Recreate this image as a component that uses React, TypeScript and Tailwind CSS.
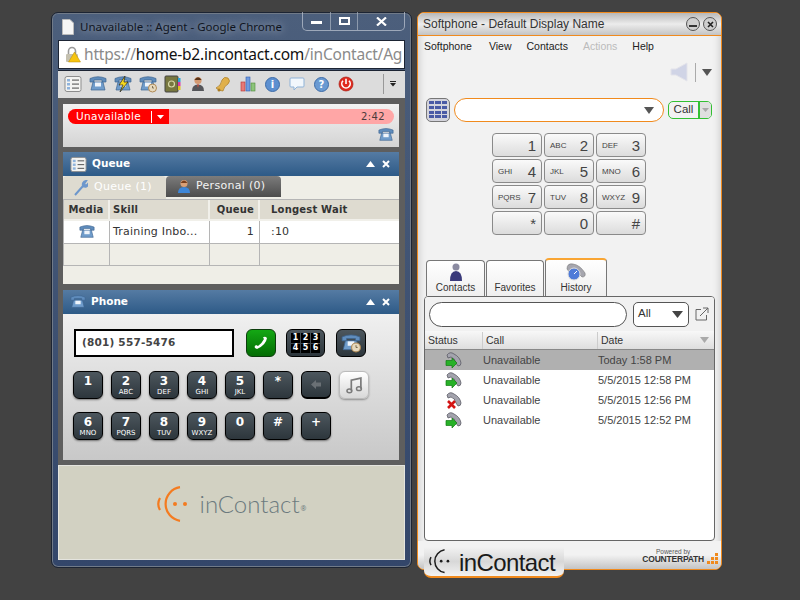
import { ReactNode } from "react";

const verdana = "font-['DejaVu_Sans',sans-serif]";
const arial = "font-['Liberation_Sans',Arial,sans-serif]";

function DeskPhone({ size = 18, clock = false }: { size?: number; clock?: boolean }) {
  return (
    <svg width={size} height={size} viewBox="0 0 18 18">
      <path d="M1 3.5 Q9 0 17 3.5 L17 7 L13 7 L13 5 L5 5 L5 7 L1 7 Z" fill="#5f8cbc" stroke="#3e648f" strokeWidth="0.7" />
      <path d="M4 7 L14 7 L16 15 L2 15 Z" fill="#6f9ccb" stroke="#3e648f" strokeWidth="0.7" />
      <rect x="6" y="7.5" width="6" height="4" fill="#eef4fb" />
      {clock && <circle cx="13.5" cy="13" r="4" fill="#e7d9bd" stroke="#b08a55" />}
      {clock && <path d="M13.5 11 V13 H15" stroke="#6a5a3d" fill="none" strokeWidth="0.8" />}
    </svg>
  );
}

function ListIcon({ size = 18 }: { size?: number }) {
  return (
    <svg width={size} height={size} viewBox="0 0 18 18">
      <rect x="1" y="1.5" width="16" height="15" rx="2" fill="#f3f3f1" stroke="#8d8d8d" />
      {[4, 8, 12].map((y) => (
        <g key={y}>
          <rect x="3" y={y} width="3" height="2.5" fill="#8fb3dc" />
          <rect x="8" y={y + 0.5} width="7" height="1.2" fill="#666" />
        </g>
      ))}
    </svg>
  );
}

function ToolbarIcons() {
  return (
    <div className="flex items-center gap-[7px]">
      <ListIcon />
      <DeskPhone />
      <div className="relative h-[18px] w-[18px]">
        <DeskPhone />
        <svg className="absolute left-0 top-0" width="18" height="18" viewBox="0 0 18 18">
          <path d="M11 1 L5 10 L9 10 L6 17 L14 7 L10 7 Z" fill="#f6d81d" stroke="#222" strokeWidth="0.7" />
        </svg>
      </div>
      <DeskPhone clock />
      <svg width="18" height="18" viewBox="0 0 18 18">
        <rect x="1" y="1" width="13" height="16" rx="1" fill="#77773f" stroke="#444" />
        <rect x="14" y="3" width="2.5" height="4" fill="#2aa5d8" />
        <rect x="14" y="7" width="2.5" height="4" fill="#d83aa5" />
        <rect x="14" y="11" width="2.5" height="4" fill="#e0c020" />
        <circle cx="7.5" cy="9" r="3" fill="none" stroke="#d8d8a8" strokeWidth="1.2" />
      </svg>
      <svg width="18" height="18" viewBox="0 0 18 18">
        <circle cx="9" cy="5.5" r="3.6" fill="#d49a72" />
        <path d="M5.4 5 Q9 -0.5 12.6 5 Z" fill="#5a3418" />
        <path d="M3 16 Q3 9.5 9 9.5 Q15 9.5 15 16 Z" fill="#55565a" />
        <path d="M8 9.5 H10 L9 13 Z" fill="#c8503a" />
      </svg>
      <svg width="18" height="18" viewBox="0 0 18 18">
        <path d="M2 13 Q7 11 8 5 Q10 1 14 3 Q17 6 14 9 Q10 11 9 16 Q5 16 2 13 Z" fill="#e0b04a" stroke="#a97b22" strokeWidth="0.7" />
        <circle cx="5" cy="15" r="1.5" fill="#a97b22" />
      </svg>
      <svg width="18" height="18" viewBox="0 0 18 18">
        <rect x="2" y="7" width="4" height="9" fill="#e77a77" stroke="#b33" strokeWidth="0.6" />
        <rect x="7" y="2" width="4" height="14" fill="#6f9be0" stroke="#2f5fb3" strokeWidth="0.6" />
        <rect x="12" y="8" width="4" height="8" fill="#8cc47a" stroke="#4f8a3c" strokeWidth="0.6" />
      </svg>
      <div className={`mx-[1px] flex h-[15px] w-[15px] items-center justify-center rounded-full border border-[#3d6ca8] bg-[#5c8fd0] text-[10px] font-bold text-white ${verdana}`}>i</div>
      <svg width="18" height="18" viewBox="0 0 18 18">
        <path d="M2 4 Q2 3 3 3 H15 Q16 3 16 4 V11 Q16 12 15 12 H9 L6 15 V12 H3 Q2 12 2 11 Z" fill="#f2f7fc" stroke="#8fb3d8" />
      </svg>
      <div className={`mx-[1px] flex h-[15px] w-[15px] items-center justify-center rounded-full border border-[#3d6ca8] bg-[#6a9ad2] text-[10px] font-bold text-white ${verdana}`}>?</div>
      <svg width="18" height="18" viewBox="0 0 18 18">
        <circle cx="9" cy="9" r="7" fill="#e02a1e" stroke="#a81c12" strokeWidth="0.7" />
        <path d="M6 5.8 A4.2 4.2 0 1 0 12 5.8" fill="none" stroke="#fff" strokeWidth="1.6" />
        <path d="M9 3.8 V9" stroke="#fff" strokeWidth="1.6" />
      </svg>
    </div>
  );
}

function PanelHeader({ icon, title }: { icon: ReactNode; title: string }) {
  return (
    <div className="flex h-[24px] items-center bg-gradient-to-b from-[#557ba3] to-[#2d5a87] pl-[7px] pr-[9px]">
      {icon}
      <span className={`ml-[5px] flex-1 text-[10.5px] font-bold text-white ${verdana}`}>{title}</span>
      <svg width="9" height="6" viewBox="0 0 9 6" className="mr-[7px]">
        <path d="M0 6 L4.5 0 L9 6 Z" fill="#fff" />
      </svg>
      <svg width="8" height="8" viewBox="0 0 8 8">
        <path d="M1 1 L7 7 M7 1 L1 7" stroke="#fff" strokeWidth="2" />
      </svg>
    </div>
  );
}

function DarkKey({ main, sub }: { main: string; sub?: string }) {
  return (
    <div className={`flex h-[28px] w-[30px] flex-col items-center rounded-[6px] border border-black bg-gradient-to-b from-[#4d575e] to-[#2d363c] pt-[3px] text-white shadow-[0_1px_2px_rgba(0,0,0,0.45)] ${verdana}`}>
      <span className="text-[12px] font-bold leading-[13px]">{main}</span>
      {sub && <span className="text-[7px] leading-[8px]">{sub}</span>}
    </div>
  );
}

function Logo({ dark = false, width = 34 }: { dark?: boolean; width?: number }) {
  const c = dark ? "#1c1c1c" : "#f47b20";
  return (
    <svg width={width} height={(width * 36) / 34} viewBox="0 0 34 36" className="shrink-0">
      <path d="M23 1.2 A17 17 0 0 0 23 34.8" fill="none" stroke={c} strokeWidth="2.2" />
      <path d="M3 12 A12 12 0 0 0 3 24" fill="none" stroke={c} strokeWidth="2.2" />
      <circle cx="18" cy="18" r="2" fill={c} />
      <circle cx="28" cy="18" r="2" fill={c} />
    </svg>
  );
}

function AgentWindow() {
  const keysOne = [["1"], ["2", "ABC"], ["3", "DEF"], ["4", "GHI"], ["5", "JKL"], ["*"]];
  const keysTwo = [["6", "MNO"], ["7", "PQRS"], ["8", "TUV"], ["9", "WXYZ"], ["0"], ["#"], ["+"]];
  return (
    <div className="absolute left-[51px] top-[12px] flex h-[556px] w-[361px] flex-col rounded-[7px] border border-[#1c2433] bg-gradient-to-b from-[#4c5f7c] to-[#33466a] px-[6px] pb-[7px] shadow-[0_0_0_1px_#707a88_inset]">
      <div className="relative flex h-[27px] items-center pl-[4px]">
        <svg width="12" height="16" viewBox="0 0 12 16">
          <path d="M0.5 0.5 H8 L11.5 4 V15.5 H0.5 Z" fill="#f5f5f5" stroke="#bbb" />
        </svg>
        <span className="ml-[6px] text-[11.5px] text-[#10151f] [text-shadow:0_0_8px_rgba(255,255,255,0.7)] font-['Noto_Sans',sans-serif]">Unavailable :: Agent - Google Chrome</span>
        <div className="absolute right-0 top-[-1px] flex h-[19px] overflow-hidden rounded-b-[5px] border border-t-0 border-[#c0c8d4]/70">
          <div className="flex w-[28px] items-center justify-center border-r border-[#aab4c2]/70">
            <div className="mt-[3px] h-[3px] w-[11px] bg-white" />
          </div>
          <div className="flex w-[27px] items-center justify-center border-r border-[#aab4c2]/70">
            <div className="h-[8px] w-[11px] border-2 border-white" />
          </div>
          <div className="flex w-[46px] items-center justify-center">
            <svg width="11" height="9" viewBox="0 0 11 9">
              <path d="M1 0.5 L10 8.5 M10 0.5 L1 8.5" stroke="#fff" strokeWidth="2.2" />
            </svg>
          </div>
        </div>
      </div>
      <div className="flex h-[29px] items-center overflow-hidden border border-[#1c2433] bg-white pl-[6px] text-[15.5px] font-['Noto_Sans',sans-serif]">
        <svg width="16" height="18" viewBox="0 0 16 18" className="shrink-0">
          <path d="M3.5 8 V5 A3.5 3.5 0 0 1 10.5 5 V8" fill="none" stroke="#9a9a9a" strokeWidth="1.6" />
          <rect x="1" y="8" width="12" height="8" rx="1" fill="#c4c0b0" />
          <path d="M9.5 6 L15.5 16 H3.5 Z" fill="#f6c411" stroke="#b48a06" strokeWidth="0.5" />
        </svg>
        <span className="ml-[3px] whitespace-nowrap tracking-[-0.2px] text-[#8a8a8a]">
          https://<span className="text-[#111]">home-b2.incontact.com</span>/inContact/Ag
        </span>
      </div>
      <div className="mt-[1px] flex h-[28px] items-center border-t border-[#1c2433] bg-[#dcdcdc] pb-[1px] pl-[6px]">
        <ToolbarIcons />
        <div className="ml-[28px] h-[20px] w-[1px] bg-[#999]" />
        <svg width="6" height="6" viewBox="0 0 6 6" className="ml-[6px]">
          <rect x="0" y="0" width="6" height="1" fill="#222" />
          <path d="M0 2 H6 L3 5.5 Z" fill="#222" />
        </svg>
      </div>
      <div className="flex flex-1 flex-col bg-[#5e5e5e] px-[5px] pt-[6px]">
        <div className="flex h-[43px] w-[336px] flex-col bg-gradient-to-b from-[#f2f2f2] to-[#d4d4d4] px-[5px] pt-[5px]">
          <div className={`flex h-[15px] items-center overflow-hidden rounded-full bg-[#ffa6a6] pr-[9px] ${verdana}`}>
            <div className="flex h-full w-[101px] items-center bg-[#ff0000] pl-[8px] text-[10.5px] tracking-[0.3px] text-white">
              <span className="w-[75px]">Unavailable</span>
              <div className="h-[12px] w-[1px] bg-white" />
              <svg width="7" height="4" viewBox="0 0 7 4" className="ml-[5px]">
                <path d="M0 0 H7 L3.5 4 Z" fill="#fff" />
              </svg>
            </div>
            <span className="ml-auto text-[10px] tracking-[0.4px] text-[#4a3b3b]">2:42</span>
          </div>
          <div className="mt-[3px] flex justify-end">
            <DeskPhone size={16} />
          </div>
        </div>
        <div className="mt-[5px] w-[336px]">
          <PanelHeader icon={<ListIcon size={17} />} title="Queue" />
          <div className={`h-[108px] bg-[#efeee7] ${verdana}`}>
            <div className="flex h-[23px] text-[11px] tracking-[0.3px]">
              <div className="flex w-[103px] items-center rounded-t-[4px] bg-[#dedbd0] pl-[11px] text-white">
                <svg width="14" height="16" viewBox="0 0 14 16">
                  <path d="M1 15 L9 6 M9 6 Q8 2 12 1 L10 4 L12 6 L14 4 Q13 8 9 6" fill="#cfe0f5" stroke="#6d97cc" strokeWidth="2" />
                </svg>
                <span className="ml-[6px]">Queue (1)</span>
              </div>
              <div className="flex h-[21px] w-[115px] items-center rounded-t-[4px] bg-gradient-to-b from-[#7c7c7c] to-[#4d4d4d] pl-[11px] text-[#f3f3f3]">
                <svg width="14" height="15" viewBox="0 0 14 15">
                  <circle cx="7" cy="4.5" r="3.5" fill="#d9a076" />
                  <path d="M3.5 4 Q7 -1 10.5 4 Z" fill="#7a3f1c" />
                  <path d="M1 14 Q1 8 7 8 Q13 8 13 14 Z" fill="#3d86d8" />
                </svg>
                <span className="ml-[5px]">Personal (0)</span>
              </div>
            </div>
            <div className="grid grid-cols-[46px_100px_50px_139px] border-y border-l border-[#b5b5b5] text-[10px] tracking-[0.2px] text-[#222]">
              <div className="flex h-[21px] items-center justify-center border-b-2 border-r-2 border-[#f1f0ea] bg-[#dedbd0] font-bold text-[#333]">Media</div>
              <div className="flex items-center border-b-2 border-r-2 border-[#f1f0ea] bg-[#dedbd0] pl-[3px] font-bold text-[#333]">Skill</div>
              <div className="flex items-center justify-end border-b-2 border-r-2 border-[#f1f0ea] bg-[#dedbd0] pr-[4px] font-bold text-[#333]">Queue</div>
              <div className="flex items-center border-b-2 border-[#f1f0ea] bg-[#dedbd0] pl-[11px] font-bold text-[#333]">Longest Wait</div>
              <div className="flex h-[23px] items-center justify-center border-b border-r border-[#b5b5b5] bg-white"><DeskPhone size={16} /></div>
              <div className="flex items-center border-b border-r border-[#b5b5b5] bg-white pl-[3px] text-[11px] text-[#333]">Training Inbo...</div>
              <div className="flex items-center justify-end border-b border-r border-[#b5b5b5] bg-white pr-[5px] text-[11px] text-[#333]">1</div>
              <div className="flex items-center border-b border-[#b5b5b5] bg-white pl-[11px] text-[11px] text-[#333]">:10</div>
              <div className="h-[21px] border-r border-[#b5b5b5]" />
              <div className="border-r border-[#b5b5b5]" />
              <div className="border-r border-[#b5b5b5]" />
              <div />
            </div>
          </div>
        </div>
        <div className="mt-[6px] w-[336px]">
          <PanelHeader icon={<DeskPhone size={16} />} title="Phone" />
          <div className="h-[146px] bg-gradient-to-b from-[#f0f0f0] to-[#c8c8c8] pl-[10px] pt-[15px]">
            <div className="flex items-center">
              <div className={`ml-[1px] flex h-[28px] w-[160px] items-center border-2 border-black bg-white pl-[6px] text-[10.5px] font-bold tracking-[0.2px] text-[#444] ${verdana}`}>(801) 557-5476</div>
              <div className="ml-[12px] flex h-[28px] w-[30px] items-center justify-center rounded-[6px] border border-[#0c3d0c] bg-gradient-to-b from-[#14a814] to-[#046d04]">
                <svg width="14" height="14" viewBox="0 0 14 14">
                  <path d="M1 12 Q0 10 2 9 L4 10 Q8 7 10 3 L9 1.5 Q11 0 13 2 Q12 9 3 13 Z" fill="#fff" />
                </svg>
              </div>
              <div className="ml-[10px] grid h-[28px] w-[39px] grid-cols-3 gap-[1px] rounded-[6px] border border-black bg-gradient-to-b from-[#4d575e] to-[#2d363c] px-[4px] py-[3px]">
                {["1", "2", "3", "4", "5", "6"].map((n) => (
                  <div key={n} className={`flex items-center justify-center bg-black text-[8px] font-bold leading-none text-white ${verdana}`}>{n}</div>
                ))}
              </div>
              <div className="ml-[11px] flex h-[28px] w-[30px] items-center justify-center rounded-[6px] border border-black bg-gradient-to-b from-[#4d575e] to-[#2d363c]">
                <DeskPhone size={20} clock />
              </div>
            </div>
            <div className="mt-[14px] flex gap-[8px]">
              {keysOne.map(([m, s]) => (
                <DarkKey key={m} main={m} sub={s} />
              ))}
              <div className="flex h-[28px] w-[30px] items-center justify-center rounded-[6px] border border-b-2 border-black bg-gradient-to-b from-[#4d575e] to-[#2d363c]">
                <svg width="10" height="9" viewBox="0 0 10 9">
                  <path d="M0 4.5 L5 0 V2.5 H10 V6.5 H5 V9 Z" fill="#6a7075" />
                </svg>
              </div>
              <div className="flex h-[28px] w-[30px] items-center justify-center rounded-[6px] border border-[#bbb] bg-gradient-to-b from-[#ffffff] to-[#d8d8d8] shadow-[0_1px_2px_rgba(0,0,0,0.35)]">
                <svg width="17" height="17" viewBox="0 0 16 16">
                  <path d="M5 13 V3 L14 1 V11" fill="none" stroke="#7a7a7a" strokeWidth="1.6" />
                  <ellipse cx="3.2" cy="13" rx="2.3" ry="1.8" fill="none" stroke="#7a7a7a" strokeWidth="1.4" />
                  <ellipse cx="12.2" cy="11" rx="2.3" ry="1.8" fill="none" stroke="#7a7a7a" strokeWidth="1.4" />
                </svg>
              </div>
            </div>
            <div className="mt-[13px] flex gap-[8px]">
              {keysTwo.map(([m, s]) => (
                <DarkKey key={m} main={m} sub={s} />
              ))}
            </div>
          </div>
        </div>
        <div className="h-[5px]" />
      </div>
      <div className="flex h-[95px] items-center justify-center border border-[#f0f0f0]/60 bg-[#d2d1c2] pb-[18px]">
        <Logo />
        <span className="ml-[9px] text-[24px] font-light leading-none text-[#6c7a7e] font-['Lato',sans-serif]">inContact</span>
        <span className="mb-[-12px] ml-[1px] text-[7px] text-[#6c7a7e]">®</span>
      </div>
    </div>
  );
}

function LightKey({ n, sub }: { n: string; sub?: string }) {
  return (
    <div className={`flex h-[24px] w-[50px] items-center justify-between rounded-[4px] border border-[#8a8a8a] bg-gradient-to-b from-[#fafafa] to-[#dcdcdc] pl-[5px] pr-[5px] text-[#444] ${arial}`}>
      <span className="mt-[2px] text-[8px]">{sub}</span>
      <span className="text-[15px] leading-none">{n}</span>
    </div>
  );
}

function CallIcon({ failed = false }: { failed?: boolean }) {
  return (
    <svg width="18" height="18" viewBox="0 0 18 18">
      <path d="M2 4 Q5 0 9 3 Q15 6 16 12 Q16 15 13 15 L11 12 Q10 7 6 6 L3 7 Z" fill="#a3a3ad" stroke="#5c5c66" strokeWidth="0.8" />
      {failed ? (
        <path d="M3 10 L10 17 M10 10 L3 17" stroke="#d31414" strokeWidth="2.6" />
      ) : (
        <path d="M1 9.5 H7 V7 L12 12 L7 17 V14.5 H1 Z" fill="#27b127" stroke="#127a12" strokeWidth="0.7" />
      )}
    </svg>
  );
}

function SoftTab({ label, icon, className }: { label: string; icon?: ReactNode; className: string }) {
  return (
    <div className={`flex flex-col items-center justify-end rounded-t-[4px] border border-b-0 border-[#777] bg-gradient-to-b from-[#ffffff] to-[#efefef] pb-[2px] text-[10px] text-[#333] ${arial} ${className}`}>
      {icon}
      <span className="leading-[12px]">{label}</span>
    </div>
  );
}

function SoftphoneWindow() {
  const keypad: [string, string?][] = [["1"], ["2", "ABC"], ["3", "DEF"], ["4", "GHI"], ["5", "JKL"], ["6", "MNO"], ["7", "PQRS"], ["8", "TUV"], ["9", "WXYZ"], ["*"], ["0"], ["#"]];
  const rows = [
    { date: "Today 1:58 PM", sel: true },
    { date: "5/5/2015 12:58 PM" },
    { date: "5/5/2015 12:56 PM", failed: true },
    { date: "5/5/2015 12:52 PM" },
  ];
  return (
    <div className={`absolute left-[417px] top-[12px] flex h-[558px] w-[305px] flex-col rounded-[7px] border border-[#f08a1d] bg-[#f2f2f2] text-[#333] shadow-[inset_0_0_8px_rgba(0,0,0,0.22)] ${arial}`}>
      <div className="flex h-[23px] items-center rounded-t-[7px] border-b border-[#f08a1d] bg-gradient-to-b from-[#b8b8b8] via-[#ececec] to-[#c4c4c4] pl-[5px] pr-[4px]">
        <span className="flex-1 text-[12px] text-[#333]">Softphone - Default Display Name</span>
        <div className="flex h-[14px] w-[14px] items-center justify-center rounded-full border border-[#555] bg-[#cfcfcf]">
          <div className="mt-[4px] h-[2px] w-[8px] bg-[#333]" />
        </div>
        <div className="ml-[3px] flex h-[14px] w-[14px] items-center justify-center rounded-full border border-[#555] bg-[#cfcfcf]">
          <svg width="7" height="7" viewBox="0 0 7 7">
            <path d="M1 1 L6 6 M6 1 L1 6" stroke="#222" strokeWidth="1.6" />
          </svg>
        </div>
      </div>
      <div className="flex h-[22px] items-center pl-[6px] text-[10.5px] text-[#222]">
        <span>Softphone</span>
        <span className="ml-[17px]">View</span>
        <span className="ml-[15px]">Contacts</span>
        <span className="ml-[15px] text-[#bbb]">Actions</span>
        <span className="ml-[15px]">Help</span>
      </div>
      <div className="mt-[2px] flex h-[24px] items-center justify-end pr-[9px]">
        <svg width="20" height="20" viewBox="0 0 20 20">
          <path d="M2 7 H7 L18 1 V19 L7 13 H2 Z" fill="#d0d4e6" stroke="#e3e3ea" />
        </svg>
        <div className="mx-[6px] h-[19px] w-[1px] bg-[#aaa]" />
        <svg width="10" height="7" viewBox="0 0 10 7">
          <path d="M0 0 H10 L5 7 Z" fill="#555" />
        </svg>
      </div>
      <div className="mt-[14px] flex items-center pl-[8px]">
        <div className="grid h-[24px] w-[24px] grid-cols-3 gap-[1px] rounded-[5px] border border-[#777] bg-[#d4d4dc] p-[2px]">
          {keypad.map(([n]) => (
            <div key={n} className="h-[3px] bg-[#4a5aa6]" />
          ))}
        </div>
        <div className="ml-[4px] flex h-[24px] w-[210px] items-center justify-end rounded-full border border-[#f08a1d] bg-white pr-[9px]">
          <svg width="10" height="7" viewBox="0 0 10 7">
            <path d="M0 0 H10 L5 7 Z" fill="#555" />
          </svg>
        </div>
        <div className="ml-[4px] flex h-[18px] w-[44px] items-center overflow-hidden rounded-[5px] border border-[#32c032] bg-[#f2f2f2] text-[11.5px] text-[#333]">
          <span className="flex-1 text-center">Call</span>
          <div className="flex h-full w-[13px] items-center justify-center border-l-2 border-[#32c032] bg-[#e0e0e0]">
            <svg width="7" height="4" viewBox="0 0 7 4">
              <path d="M0 0 H7 L3.5 4 Z" fill="#aaa" />
            </svg>
          </div>
        </div>
      </div>
      <div className="ml-[74px] mt-[11px] grid w-[154px] grid-cols-3 gap-[2px]">
        {keypad.map(([n, s]) => (
          <LightKey key={n} n={n} sub={s} />
        ))}
      </div>
      <div className="ml-[8px] mt-[23px] flex items-end">
        <SoftTab
          className="h-[36px] w-[59px]"
          label="Contacts"
          icon={
            <svg width="14" height="20" viewBox="0 0 14 20">
              <circle cx="7" cy="5" r="3.5" fill="#8a8aa0" />
              <path d="M1 19 Q1 9 7 9 Q13 9 13 19 Z" fill="#3a3a7a" />
            </svg>
          }
        />
        <SoftTab className="ml-[1px] h-[36px] w-[58px]" label="Favorites" />
        <SoftTab
          className="ml-[1px] h-[38px] w-[62px] border-t-2 border-t-[#f9a533]"
          label="History"
          icon={
            <svg width="22" height="20" viewBox="0 0 22 20">
              <path d="M2 7 Q2 1 8 2 Q15 3 20 11 Q21 15 17 15 L14 12 Q12 8 8 8 L5 11 Z" fill="#a6a6ae" stroke="#777" strokeWidth="0.6" />
              <circle cx="9" cy="12" r="6" fill="#4f7bd8" stroke="#ddd" />
              <path d="M9 12 L12 9" stroke="#fff" />
            </svg>
          }
        />
      </div>
      <div className="ml-[6px] flex h-[245px] w-[291px] flex-col overflow-hidden rounded-[4px] border border-[#666] bg-white">
        <div className="flex h-[34px] items-center bg-[#f1f1f1] pl-[4px]">
          <div className="h-[25px] w-[198px] rounded-full border border-[#555] bg-white" />
          <div className="ml-[6px] flex h-[25px] w-[56px] items-center justify-between rounded-[5px] border border-[#555] bg-white pl-[4px] pr-[5px] text-[11.5px]">
            <span>All</span>
            <svg width="11" height="7" viewBox="0 0 11 7">
              <path d="M0 0 H11 L5.5 7 Z" fill="#444" />
            </svg>
          </div>
          <svg width="14" height="14" viewBox="0 0 14 14" className="ml-[6px]">
            <path d="M6 2.5 H1 V13 H11.5 V8" fill="none" stroke="#666" />
            <path d="M5 9 L13 1 M8 1 H13 V6" fill="none" stroke="#666" />
          </svg>
        </div>
        <div className="flex h-[19px] items-center border-b border-[#888] bg-gradient-to-b from-[#f8f8f8] to-[#dedede] text-[10.5px] text-[#333]">
          <span className="w-[58px] border-r border-[#ccc] pl-[3px] leading-[17px]">Status</span>
          <span className="w-[115px] border-r border-[#ccc] pl-[3px] leading-[17px]">Call</span>
          <span className="flex-1 pl-[3px] leading-[17px]">Date</span>
          <svg width="9" height="6" viewBox="0 0 9 6" className="mr-[5px]">
            <path d="M0 0 H9 L4.5 6 Z" fill="#aaa" />
          </svg>
        </div>
        {rows.map((row) => (
          <div key={row.date} className={`flex h-[20px] items-center text-[11px] text-[#444] ${row.sel ? "bg-[#b0b0b0]" : "bg-white"}`}>
            <div className="ml-[20px] w-[38px]">
              <CallIcon failed={row.failed} />
            </div>
            <span className="w-[115px]">Unavailable</span>
            <span>{row.date}</span>
          </div>
        ))}
      </div>
      <div className="relative flex-1 rounded-b-[7px] bg-gradient-to-b from-[#f2f2f2] from-50% to-[#c4c4c4]">
        <div className="absolute bottom-[-9px] left-[6px] flex h-[31px] w-[140px] items-center rounded-b-[7px] border-b-2 border-[#f08a1d] bg-gradient-to-b from-[#f2f2f2] via-[#d8d8d8] to-[#f2f2f2] pl-[5px]">
          <Logo dark width={23} />
          <span className="ml-[7px] pt-[3px] text-[24px] leading-none tracking-[-0.6px] text-[#1a1a1a]">inContact</span>
        </div>
        <div className="absolute bottom-[5px] right-[3px] flex items-end">
          <div className="flex flex-col items-center">
            <span className="text-[6.5px] leading-[7px] text-[#555]">Powered by</span>
            <span className="text-[8.5px] font-bold leading-[9px] tracking-[-0.2px] text-[#333]">COUNTERPATH</span>
          </div>
          <div className="ml-[3px] grid grid-cols-3 gap-[1px]">
            {[0, 0, 1, 0, 1, 1, 1, 1, 1].map((on, i) => (
              <div key={i} className={`h-[3px] w-[3px] ${on ? "bg-[#f08a1d]" : "bg-transparent"}`} />
            ))}
          </div>
        </div>
      </div>
    </div>
  );
}

export default function App() {
  return (
    <div className="relative h-[600px] w-[800px] overflow-hidden bg-[#424242]">
      <AgentWindow />
      <SoftphoneWindow />
    </div>
  );
}
